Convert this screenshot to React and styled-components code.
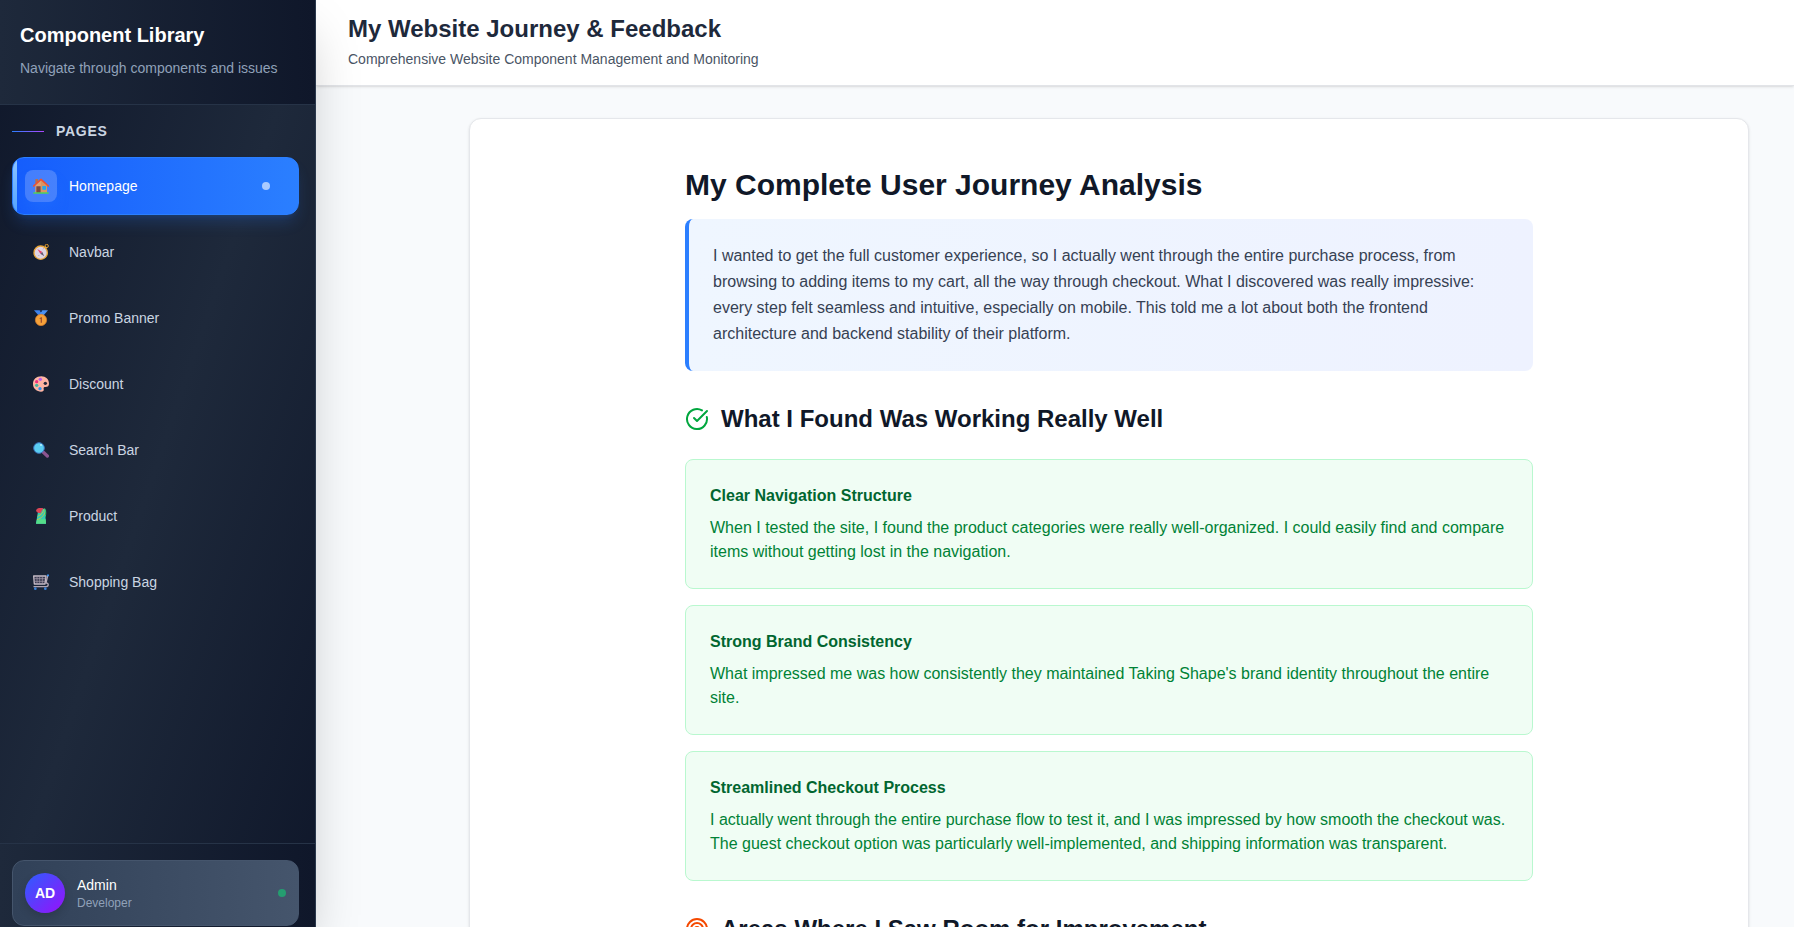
import React from "react";
import styled, { createGlobalStyle } from "styled-components";
import { CircleCheckBig, Target } from "lucide-react";

const GlobalStyle = createGlobalStyle`
  *, *::before, *::after { box-sizing: border-box; }
  body {
    margin: 0;
    background: #f8fafc;
    font-family: "Liberation Sans", Arial, sans-serif;
    font-size: 16px;
    line-height: 24px;
  }
  h1, h2, h3, p, ul { margin: 0; padding: 0; }
`;

const Shell = styled.div`
  display: flex;
  height: 100vh;
  overflow: hidden;
`;

const Sidebar = styled.aside`
  position: relative;
  z-index: 1;
  display: flex;
  flex-direction: column;
  flex: none;
  width: 316px;
  border-right: 1px solid #2b394d;
  background: linear-gradient(to bottom right, #0f172a, #1e293b, #0f172a);
  box-shadow: 0 25px 50px -12px rgba(0, 0, 0, 0.25);
`;

const SidebarHeader = styled.header`
  padding: 21px 20px 26px;
  border-bottom: 1px solid #263347;
  background: linear-gradient(to right, #1e293b, #0f172a);
`;

const Brand = styled.h2`
  color: #fff;
  font-size: 20px;
  line-height: 28px;
`;

const BrandNote = styled.p`
  margin-top: 9px;
  color: #90a1b9;
  font-size: 14px;
  line-height: 20px;
`;

const Nav = styled.nav`
  flex: 1;
  min-height: 0;
  padding: 16px 16px 16px 12px;
`;

const NavHeading = styled.h3`
  display: flex;
  align-items: center;
  gap: 12px;
  margin-bottom: 16px;
  color: #cad5e2;
  font-size: 14px;
  line-height: 20px;
  letter-spacing: 0.05em;
  text-transform: uppercase;

  &::before {
    content: "";
    width: 32px;
    height: 1px;
    background: linear-gradient(to right, #2b7fff, #ad46ff);
  }
`;

const NavList = styled.ul`
  display: flex;
  flex-direction: column;
  gap: 8px;
  list-style: none;
`;

const NavLink = styled.a`
  position: relative;
  display: flex;
  align-items: center;
  gap: 12px;
  padding: 12px 28px 12px 12px;
  overflow: hidden;
  border: 1px solid ${(p) => (p.$active ? "#2b7fff" : "transparent")};
  border-radius: 12px;
  background: ${(p) => (p.$active ? "linear-gradient(to right, #155dfc, #2b7fff)" : "none")};
  box-shadow: ${(p) =>
    p.$active ? "0 10px 15px -3px rgba(43, 127, 255, 0.2), 0 4px 6px -4px rgba(43, 127, 255, 0.2)" : "none"};
  color: ${(p) => (p.$active ? "#fff" : "#cad5e2")};
  font-size: 14px;
  line-height: 20px;
  text-decoration: none;
`;

const ActiveBar = styled.span`
  position: absolute;
  inset: 0 auto 0 0;
  width: 4px;
  background: linear-gradient(to bottom, #8ec5ff, #51a2ff);
`;

const IconTile = styled.span`
  display: grid;
  place-items: center;
  width: 32px;
  height: 32px;
  border-radius: 8px;
  background: ${(p) => (p.$active ? "rgba(255, 255, 255, 0.2)" : "none")};
  box-shadow: ${(p) => (p.$active ? "0 10px 15px -3px rgba(43, 127, 255, 0.3)" : "none")};
`;

const NavLabel = styled.span`
  flex: 1;
`;

const Dot = styled.span`
  width: 8px;
  height: 8px;
  border-radius: 50%;
  background: ${(p) => p.$color};
`;

const SidebarFooter = styled.footer`
  padding: 16px 16px 1px 12px;
  border-top: 1px solid #263347;
  background: linear-gradient(to right, #1e293b, #0f172a);
`;

const UserCard = styled.div`
  display: flex;
  align-items: center;
  gap: 12px;
  padding: 12px;
  border: 1px solid #45556c;
  border-radius: 12px;
  background: linear-gradient(to right, #314158, #45556c);
`;

const Avatar = styled.span`
  display: grid;
  place-items: center;
  width: 40px;
  height: 40px;
  border-radius: 50%;
  background: linear-gradient(to bottom right, #2b5fff, #9810fa);
  box-shadow: 0 4px 8px rgba(0, 0, 0, 0.15);
  color: #fff;
  font-size: 14px;
  font-weight: 700;
`;

const UserText = styled.div`
  flex: 1;
`;

const UserName = styled.p`
  color: #fff;
  font-size: 14px;
  line-height: 20px;
`;

const UserRole = styled.p`
  color: #90a1b9;
  font-size: 12px;
  line-height: 16px;
`;

const Page = styled.div`
  display: flex;
  flex: 1;
  flex-direction: column;
  min-width: 0;
`;

const TopBar = styled.header`
  position: relative;
  padding: 13px 32px 16px;
  border-bottom: 1px solid #e2e4e8;
  background: #fff;
  box-shadow: 0 1px 3px rgba(0, 0, 0, 0.1), 0 1px 2px -1px rgba(0, 0, 0, 0.1);
`;

const SiteTitle = styled.h1`
  color: #1e293b;
  font-size: 24px;
  line-height: 32px;
`;

const SiteNote = styled.p`
  margin-top: 4px;
  color: #4a5565;
  font-size: 14px;
  line-height: 20px;
`;

const Content = styled.main`
  flex: 1;
  min-height: 0;
  overflow-y: auto;
  scrollbar-width: none;
  padding: 32px 45px 32px 32px;
`;

const Card = styled.div`
  max-width: 1280px;
  margin-left: auto;
  padding: 48px 24px;
  border: 1px solid #e5e7eb;
  border-radius: 12px;
  background: #fff;
  box-shadow: 0 1px 3px rgba(0, 0, 0, 0.1), 0 1px 2px -1px rgba(0, 0, 0, 0.1);
`;

const Article = styled.article`
  max-width: 896px;
  margin: 0 auto;
  padding: 0 24px;
`;

const ArticleTitle = styled.h2`
  margin-bottom: 16px;
  color: #101828;
  font-size: 30px;
  line-height: 36px;
`;

const Intro = styled.p`
  padding: 24px;
  border-left: 4px solid #2b7fff;
  border-radius: 8px;
  background: linear-gradient(to right, #eff6ff, #eef2ff);
  color: #364153;
  line-height: 26px;
`;

const Section = styled.section`
  margin-top: 32px;
`;

const SectionTitle = styled.h2`
  display: flex;
  align-items: center;
  gap: 12px;
  margin-bottom: 24px;
  color: #101828;
  font-size: 24px;
  line-height: 32px;

  svg { color: ${(p) => p.$accent}; }
`;

const FindingList = styled.div`
  display: flex;
  flex-direction: column;
  gap: 16px;
`;

const Finding = styled.div`
  padding: 24px;
  border: 1px solid #b9f8cf;
  border-radius: 8px;
  background: #f0fdf4;
`;

const FindingTitle = styled.h3`
  margin-bottom: 8px;
  color: #016630;
  font-size: 16px;
  line-height: 24px;
`;

const FindingText = styled.p`
  color: #008236;
`;

const Glyph = ({ children }) => (
  <svg width="16" height="16" viewBox="0 0 48 48" aria-hidden="true">
    {children}
  </svg>
);

const House = () => (
  <Glyph>
    <path d="M7 3h8v12H7z" fill="#b5704d" />
    <path d="M7 22 24 6l18 16v23H7z" fill="#e0a070" />
    <path d="M24 6 42 22v23H24z" fill="#d99563" />
    <path d="M2 24 24 4l22 20" fill="none" stroke="#f0512d" strokeWidth="5" strokeLinejoin="round" strokeLinecap="round" />
    <path d="M10 25h13v20H10z" fill="#7a4a44" />
    <path d="M28 24h11v11H28z" fill="#22a7ee" />
    <path d="M1 43h46v4H1z" fill="#4fd25a" />
  </Glyph>
);

const Compass = () => (
  <Glyph>
    <circle cx="41" cy="6" r="5" fill="none" stroke="#d9962e" strokeWidth="3" />
    <path d="m32 12 6-5 4 4-6 6z" fill="#f0b63f" />
    <circle cx="23" cy="26" r="20" fill="#e0d5e3" stroke="#eaa63a" strokeWidth="4" />
    <path d="m13 15 15 9-6 5z" fill="#e8436b" />
    <path d="m34 37-12-8 6-5z" fill="#665a70" />
    <path d="M16 36l3-3M30 16l2-3" stroke="#9a8da3" strokeWidth="2" />
  </Glyph>
);

const Medal = () => (
  <Glyph>
    <path d="M3 1h17l6 10-6 9z" fill="#3f83ec" />
    <path d="M45 1H28l-8 12 8 7z" fill="#4b91f3" />
    <path d="M20 1h8l-4 6z" fill="#173a72" />
    <circle cx="24" cy="30" r="17" fill="#f5a13a" stroke="#d97d2b" strokeWidth="2" />
    <path d="M20 25l4-3h3v16h-4V27h-3z" fill="#a0512f" />
  </Glyph>
);

const Palette = () => (
  <Glyph>
    <path d="M25 1C10 1 0 10 0 24c0 14 12 23 24 23 6 0 10-3 8-8-1-4 1-6 5-6 8 0 11-4 11-10C48 10 38 1 25 1z" fill="#ffb5a3" />
    <circle cx="22" cy="10" r="5" fill="#b55cf0" />
    <circle cx="11" cy="17" r="5" fill="#f0327e" />
    <circle cx="11" cy="28" r="5" fill="#45b8a0" />
    <circle cx="21" cy="38" r="5" fill="#2f95f0" />
    <circle cx="37" cy="22" r="5" fill="#22263b" />
  </Glyph>
);

const Magnifier = () => (
  <Glyph>
    <path d="m31 31 12 11" stroke="#8b5590" strokeWidth="10" strokeLinecap="round" />
    <circle cx="18" cy="18" r="16" fill="#5accf0" stroke="#3c74bd" strokeWidth="3" />
    <circle cx="24" cy="9" r="3" fill="#b8effc" />
  </Glyph>
);

const Dress = () => (
  <Glyph>
    <path d="M17 2h20v18l2 27H9l4-25z" fill="#35cbb4" />
    <path d="M12 34 9 47h30l-1-13z" fill="#55dd88" />
    <path d="M10 5C15-1 24 0 31 1L23 16l-8-2c-4-1-7-5-5-9z" fill="#dd4555" />
    <path d="M34 2C31 13 24 21 14 25M38 7C34 23 25 31 12 35" fill="none" stroke="#bcc64f" strokeWidth="3" />
    <path d="M35 3c4 5 4 12 2 23" fill="none" stroke="#29c978" strokeWidth="3" />
  </Glyph>
);

const Cart = () => (
  <Glyph>
    <path d="M2 6h37l-3 24H4z" fill="#393a50" stroke="#c5bbc6" strokeWidth="4" strokeLinejoin="round" />
    <path d="M12 8v21M20 8v21M28 8v21M4 14h34M4 22h33" stroke="#a99eae" strokeWidth="2" />
    <path d="m44 5-5 22" stroke="#b8acba" strokeWidth="4" />
    <path d="M3 38h35c10 0 10-12 1-11" fill="none" stroke="#b0a4b2" strokeWidth="4" strokeLinecap="round" />
    <path d="M42 4h6" stroke="#3b91ef" strokeWidth="5" />
    <circle cx="7" cy="44" r="4" fill="#3b82d8" />
    <circle cx="37" cy="44" r="4" fill="#3b82d8" />
  </Glyph>
);

const pages = [
  { label: "Homepage", Icon: House, active: true },
  { label: "Navbar", Icon: Compass },
  { label: "Promo Banner", Icon: Medal },
  { label: "Discount", Icon: Palette },
  { label: "Search Bar", Icon: Magnifier },
  { label: "Product", Icon: Dress },
  { label: "Shopping Bag", Icon: Cart },
];

const findings = [
  {
    title: "Clear Navigation Structure",
    text: "When I tested the site, I found the product categories were really well-organized. I could easily find and compare items without getting lost in the navigation.",
  },
  {
    title: "Strong Brand Consistency",
    text: "What impressed me was how consistently they maintained Taking Shape's brand identity throughout the entire site.",
  },
  {
    title: "Streamlined Checkout Process",
    text: "I actually went through the entire purchase flow to test it, and I was impressed by how smooth the checkout was. The guest checkout option was particularly well-implemented, and shipping information was transparent.",
  },
];

export default function App() {
  return (
    <>
      <GlobalStyle />
      <Shell>
        <Sidebar>
          <SidebarHeader>
            <Brand>Component Library</Brand>
            <BrandNote>Navigate through components and issues</BrandNote>
          </SidebarHeader>
          <Nav aria-label="Pages">
            <NavHeading>Pages</NavHeading>
            <NavList>
              {pages.map(({ label, Icon, active }) => (
                <li key={label}>
                  <NavLink
                    href={`#${label.toLowerCase().replace(" ", "-")}`}
                    $active={active}
                    aria-current={active ? "page" : undefined}
                  >
                    {active && <ActiveBar />}
                    <IconTile $active={active}>
                      <Icon />
                    </IconTile>
                    <NavLabel>{label}</NavLabel>
                    {active && <Dot $color="rgba(255, 255, 255, 0.6)" />}
                  </NavLink>
                </li>
              ))}
            </NavList>
          </Nav>
          <SidebarFooter>
            <UserCard>
              <Avatar>AD</Avatar>
              <UserText>
                <UserName>Admin</UserName>
                <UserRole>Developer</UserRole>
              </UserText>
              <Dot $color="#259d70" />
            </UserCard>
          </SidebarFooter>
        </Sidebar>
        <Page>
          <TopBar>
            <SiteTitle>My Website Journey &amp; Feedback</SiteTitle>
            <SiteNote>Comprehensive Website Component Management and Monitoring</SiteNote>
          </TopBar>
          <Content>
            <Card>
              <Article>
                <ArticleTitle>My Complete User Journey Analysis</ArticleTitle>
                <Intro>
                  I wanted to get the full customer experience, so I actually went through the entire purchase
                  process, from browsing to adding items to my cart, all the way through checkout. What I
                  discovered was really impressive: every step felt seamless and intuitive, especially on mobile.
                  This told me a lot about both the frontend architecture and backend stability of their platform.
                </Intro>
                <Section>
                  <SectionTitle $accent="#00a63e">
                    <CircleCheckBig size={24} aria-hidden="true" />
                    What I Found Was Working Really Well
                  </SectionTitle>
                  <FindingList>
                    {findings.map(({ title, text }) => (
                      <Finding key={title}>
                        <FindingTitle>{title}</FindingTitle>
                        <FindingText>{text}</FindingText>
                      </Finding>
                    ))}
                  </FindingList>
                </Section>
                <Section>
                  <SectionTitle $accent="#f54900">
                    <Target size={24} aria-hidden="true" />
                    Areas Where I Saw Room for Improvement
                  </SectionTitle>
                </Section>
              </Article>
            </Card>
          </Content>
        </Page>
      </Shell>
    </>
  );
}
